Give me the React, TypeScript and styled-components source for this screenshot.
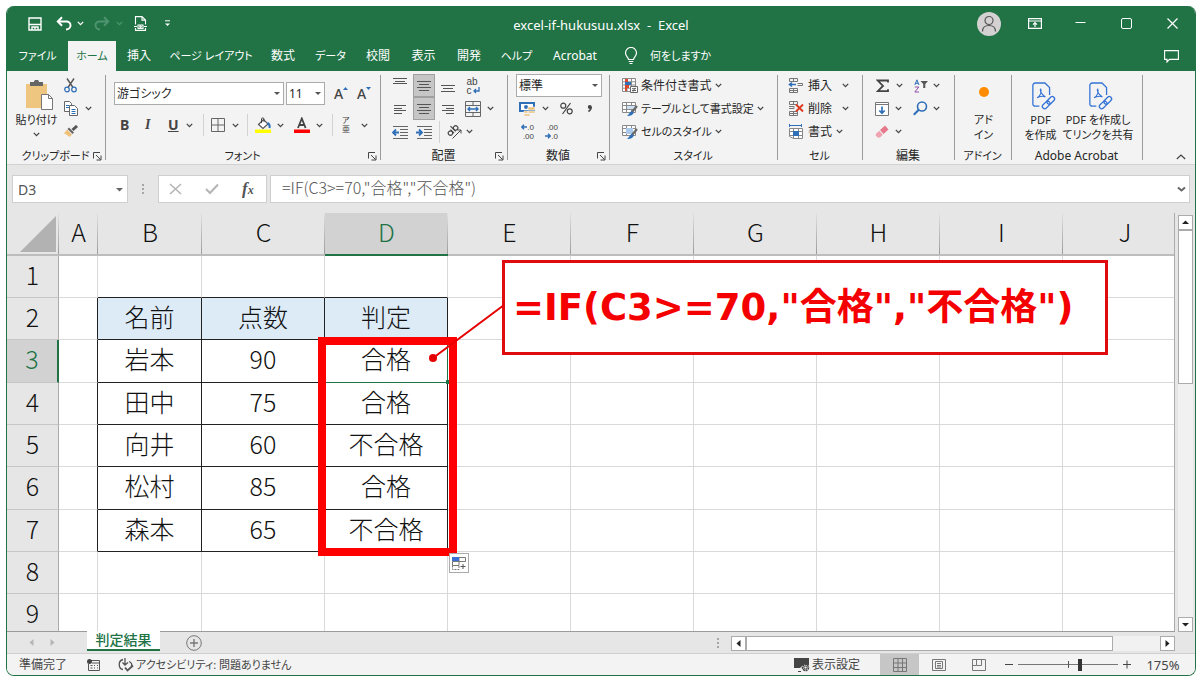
import React from 'react';
import styled, { createGlobalStyle, css } from 'styled-components';

const GREEN = '#217346';
const INK = '#444444';
const BLUE = '#2f6fb7';
const UI_FONT = '"Noto Sans", "Noto Sans CJK JP", sans-serif';
const CELL_FONT = '"Noto Sans CJK JP", "Noto Sans", sans-serif';

const Global = createGlobalStyle`
  * { box-sizing: border-box; }
  body { margin: 0; background: #fff; font-family: ${UI_FONT}; font-size: 12px; color: #262626; font-feature-settings: "palt"; }
  button, input, select { font: inherit; font-feature-settings: inherit; color: inherit; margin: 0; }
  svg { display: block; flex: none; }
`;

const Page = styled.div`
  height: 100vh;
  padding: 6px 6px 8px;
`;

const Window = styled.main`
  display: flex;
  flex-direction: column;
  height: 100%;
  overflow: hidden;
  border: 1px solid ${GREEN};
  border-top: 0;
  border-radius: 8px;
  background: #e6e6e6;
`;

const PlainButton = styled.button<{ $small?: boolean }>`
  display: flex;
  align-items: center;
  justify-content: center;
  padding: 0;
  border: 0;
  background: none;
  white-space: nowrap;
  line-height: 16px;
  ${(p) => p.$small && css`font-size: 11px;`}
`;

/* ---------- title bar ---------- */

const TitleBar = styled.header`
  display: grid;
  grid-template-columns: 1fr auto 1fr;
  align-items: center;
  height: 35px;
  flex: none;
  background: ${GREEN};
  color: #fff;
`;

const Tracks = styled.div<{ $cols: string; $pad?: number }>`
  display: grid;
  grid-template-columns: ${(p) => p.$cols};
  justify-items: start;
  align-items: center;
  padding-left: ${(p) => p.$pad ?? 0}px;
`;

const Title = styled.h1`
  margin: 0;
  font-size: 13px;
  font-weight: 400;
  line-height: 16px;
  white-space: pre;
  padding-top: 3px;
`;

const WindowButtons = styled(Tracks)`
  justify-self: end;
`;

const Avatar = styled(PlainButton)`
  width: 24px;
  height: 24px;
  border-radius: 50%;
  background: #d3d1d1;
`;

/* ---------- tabs ---------- */

const TabBar = styled.nav`
  display: flex;
  height: 30px;
  flex: none;
  background: ${GREEN};
  color: #fff;
`;

const Tab = styled(PlainButton)<{ $w: number; $active?: boolean }>`
  width: ${(p) => p.$w}px;
  ${(p) => p.$active && css`background: #f3f3f3; color: ${GREEN};`}
`;

const TellMe = styled(PlainButton)`
  gap: 12px;
  margin-left: 15px;
`;

const CommentButton = styled(PlainButton)`
  margin: 0 16px 0 auto;
`;

/* ---------- ribbon ---------- */

const Ribbon = styled.section`
  display: flex;
  height: 94px;
  flex: none;
  background: #f3f3f3;
  border-bottom: 1px solid #d2d2d2;
`;

const Group = styled.div<{ $w: number }>`
  display: flex;
  flex-direction: column;
  position: relative;
  width: ${(p) => p.$w}px;
  padding-top: 3px;
  flex: none;
  &::after {
    content: '';
    position: absolute;
    right: 0;
    top: 4px;
    bottom: 4px;
    width: 1px;
    background: #9b9b9b;
  }
`;

const GroupBody = styled.div<{ $pad?: number }>`
  height: 74px;
  padding-top: ${(p) => p.$pad ?? 0}px;
`;

const GroupFoot = styled.div<{ $small?: boolean }>`
  display: grid;
  grid-template-columns: 14px 1fr 14px;
  align-items: center;
  text-align: center;
  height: 16px;
  line-height: 16px;
  padding-right: 2px;
  white-space: nowrap;
  ${(p) => p.$small && css`font-size: 11px;`}
`;

const WideFoot = styled(GroupFoot)`
  grid-template-columns: 1fr;
`;

const ToolRow = styled(Tracks)<{ $h?: number }>`
  height: ${(p) => p.$h ?? 23}px;
`;

const Tool = styled(PlainButton)<{ $w?: number; $on?: boolean }>`
  height: 23px;
  ${(p) => p.$w && css`width: ${p.$w}px;`}
  ${(p) => p.$on && css`background: #c6c6c6; border: 1px solid #a0a0a0;`}
`;

const Letter = styled.span<{ $italic?: boolean; $under?: boolean }>`
  font-family: ${(p) => (p.$italic ? '"Liberation Serif", serif' : '"Noto Sans", sans-serif')};
  font-size: 14px;
  font-weight: 700;
  line-height: 16px;
  color: ${INK};
  font-style: ${(p) => (p.$italic ? 'italic' : 'normal')};
  text-decoration: ${(p) => (p.$under ? 'underline' : 'none')};
`;

const SizeLetter = styled(Letter)`
  font-weight: 500;
`;

const Rule = styled.span`
  width: 1px;
  height: 22px;
  background: #d2d2d2;
`;

const Combo = styled.label<{ $w: number }>`
  position: relative;
  display: block;
  width: ${(p) => p.$w}px;
  height: 23px;
  &::after {
    content: '';
    position: absolute;
    right: 4px;
    top: 10px;
    border: 3px solid transparent;
    border-top-color: #555;
    border-bottom: 0;
    pointer-events: none;
  }
  select {
    appearance: none;
    width: 100%;
    height: 100%;
    padding: 0 2px;
    border: 1px solid #ababab;
    border-radius: 0;
    background: #fff;
  }
`;

const ClipGrid = styled.div`
  display: grid;
  grid-template-columns: 57px 1fr;
`;

const BigButton = styled.button<{ $w: number; $small?: boolean }>`
  display: flex;
  flex-direction: column;
  align-items: center;
  width: ${(p) => p.$w}px;
  height: 74px;
  padding: 5px 0 0;
  border: 0;
  background: none;
  line-height: 15px;
  white-space: nowrap;
  ${(p) => p.$small && css`font-size: 11px;`}
`;

const BigIcon = styled.span<{ $pad?: number }>`
  display: flex;
  align-items: center;
  justify-content: center;
  height: 33px;
  padding-left: ${(p) => p.$pad ?? 0}px;
`;

const BigCaret = styled.span`
  padding-top: 5px;
`;

const BigPair = styled.div`
  display: flex;
`;

const LabelTool = styled(PlainButton)`
  height: 23px;
  gap: 4px;
`;

const StyleTool = styled(LabelTool)`
  gap: 3px;
`;

const Collapse = styled(PlainButton)`
  margin: auto 9px 1px auto;
  height: 12px;
`;

/* ---------- formula bar ---------- */

const FormulaBar = styled.section`
  display: flex;
  align-items: center;
  height: 48px;
  flex: none;
  padding: 0 5px;
`;

const BarBox = styled.div<{ $w?: number }>`
  display: flex;
  align-items: center;
  height: 28px;
  border: 1px solid #cfcfcf;
  background: #fff;
  ${(p) => (p.$w ? css`width: ${p.$w}px; flex: none;` : css`flex: 1; margin-left: 3px;`)}
`;

const NameInput = styled.input`
  flex: 1;
  min-width: 0;
  border: 0;
  padding: 0 5px;
  background: none;
  color: #555;
  outline: 0;
  font-size: 14px;
`;

const FormulaInput = styled(NameInput)`
  height: 26px;
  padding: 0 11px 4px;
  font-family: ${CELL_FONT};
  font-size: 16px;
  font-weight: 300;
  font-feature-settings: normal;
`;

const NameArrow = styled(PlainButton)`
  width: 16px;
`;

const FxRow = styled(Tracks)`
  flex: 1;
`;

const Fx = styled.span`
  font-family: "Liberation Serif", serif;
  font-style: italic;
  font-weight: 700;
  font-size: 17px;
  line-height: 20px;
  color: #555;
  small { font-size: 12px; }
`;

const Grip = styled.span`
  display: flex;
  flex-direction: column;
  align-items: center;
  justify-content: center;
  gap: 2px;
  width: 30px;
  flex: none;
  i { width: 2px; height: 2px; background: #a6a6a6; }
`;

const SheetGrip = styled(Grip)`
  margin-left: auto;
  margin-right: -2px;
`;

/* ---------- sheet ---------- */

const SheetArea = styled.section`
  display: flex;
  flex: 1;
  min-height: 0;
`;

const Canvas = styled.div`
  position: relative;
  flex: 1;
  min-width: 0;
  overflow: hidden;
  border-right: 1px solid #ababab;
  border-bottom: 1px solid #9b9b9b;
`;

const Grid = styled.table`
  width: calc(100% + 13px);
  table-layout: fixed;
  border-collapse: separate;
  border-spacing: 0;
  background: #fff;
  font-family: ${CELL_FONT};
  font-feature-settings: normal;
  font-size: 25px;
  line-height: 34px;
  color: #111;
  text-align: center;
  th, td { padding: 0 0 6px; font-weight: 300; overflow: hidden; }
  thead tr { height: 43px; }
  tbody tr { height: 42px; }
  tbody tr:nth-child(3n) { height: 43px; }
`;

const ColHead = styled.th<{ $on?: boolean }>`
  background: linear-gradient(#e0e0e0, #9b9b9b) right / 1px 100% no-repeat ${(p) => (p.$on ? '#d2d2d2' : '#e6e6e6')};
  border-bottom: ${(p) => (p.$on ? `2px solid ${GREEN}` : '2px solid #bdbdbd')};
  color: ${(p) => (p.$on ? GREEN : '#111')};
`;

const Corner = styled(ColHead)`
  && { padding: 0; }
  vertical-align: bottom;
  svg { margin: 0 0 2px 13px; }
`;

const RowHead = styled.th<{ $on?: boolean }>`
  background: ${(p) => (p.$on ? '#d2d2d2' : '#e6e6e6')};
  border-bottom: 1px solid #c6c6c6;
  border-right: ${(p) => (p.$on ? `2px solid ${GREEN}` : '1px solid #ababab')};
  color: ${(p) => (p.$on ? GREEN : '#111')};
`;

const Cell = styled.td<{ $right?: boolean; $bottom?: boolean; $fill?: boolean; $active?: boolean }>`
  border-right: 1px solid ${(p) => (p.$active ? GREEN : p.$right ? '#222' : '#d9d9d9')};
  border-bottom: 1px solid ${(p) => (p.$active ? GREEN : p.$bottom ? '#222' : '#d9d9d9')};
  ${(p) => p.$fill && css`background: #ddebf7;`}
`;

const FillHandle = styled.span`
  position: absolute;
  left: 439px;
  top: 167px;
  width: 4px;
  height: 4px;
  background: ${GREEN};
`;

const RedFrame = styled.div`
  position: absolute;
  left: 311px;
  top: 124px;
  width: 139px;
  height: 219px;
  border: 8px solid #ff0000;
`;

const Pointer = styled.svg`
  position: absolute;
  left: 420px;
  top: 90px;
`;

const Callout = styled.div`
  position: absolute;
  left: 495px;
  top: 47px;
  width: 606px;
  height: 95px;
  padding: 17px 8px;
  border: 3px solid #e00b0f;
  background: #fff;
  color: #f50000;
  font-family: "DejaVu Sans", "Noto Sans CJK JP", sans-serif;
  font-feature-settings: normal;
  font-size: 37px;
  font-weight: 700;
  line-height: 56px;
  white-space: nowrap;
`;

const FillOptions = styled(PlainButton)`
  position: absolute;
  left: 442px;
  top: 340px;
  width: 20px;
  height: 20px;
  border: 1px solid #ababab;
  background: #fff;
`;

const VScroll = styled.div`
  display: flex;
  flex-direction: column;
  width: 15px;
  margin: 2px 2px 0 3px;
  background: #f1f1f1;
  flex: none;
`;

const ScrollButton = styled(PlainButton)`
  width: 15px;
  height: 15px;
  flex: none;
  border: 1px solid #ababab;
  background: #fff;
`;

const VThumb = styled.div`
  margin-bottom: auto;
  flex: 0 0 154px;
  border: 1px solid #ababab;
  background: #fff;
`;

const SheetBar = styled.nav`
  display: flex;
  height: 22px;
  flex: none;
  border-bottom: 1px solid #cfcfcf;
`;

const SheetTab = styled(PlainButton)`
  position: relative;
  width: 73px;
  height: 20px;
  margin: -1px 26px 0 25px;
  border-bottom: 2px solid ${GREEN};
  background: #fff;
  color: ${GREEN};
  font-size: 14px;
  font-weight: 500;
`;

const HScroll = styled.div`
  display: flex;
  width: 444px;
  height: 15px;
  margin: 4px 20px 0 0;
  background: #f1f1f1;
  flex: none;
`;

const HThumb = styled.div`
  width: 367px;
  margin-right: auto;
  border: 1px solid #ababab;
  background: #fff;
`;

const StatusBar = styled.footer`
  display: flex;
  align-items: center;
  height: 21px;
  flex: none;
  background: #f3f3f3;
  color: #444;
  white-space: nowrap;
`;

const StatusLeft = styled.div`
  display: flex;
  align-items: center;
  margin: 0 auto 0 12px;
`;

const StatusText = styled.span`
  line-height: 16px;
`;

const StatusTool = styled(PlainButton)<{ $ml: number; $w?: number; $on?: boolean }>`
  height: 21px;
  gap: 2px;
  margin-left: ${(p) => p.$ml}px;
  ${(p) => p.$w && css`width: ${p.$w}px;`}
  ${(p) => p.$on && css`background: #c6c6c6;`}
`;

const Zoom = styled.input`
  appearance: none;
  width: 100px;
  height: 13px;
  background:
    linear-gradient(#555, #555) center / 1px 7px no-repeat,
    linear-gradient(#777, #777) center / 100% 1px no-repeat;
  && { margin: 0 5px; }
  &::-webkit-slider-thumb {
    appearance: none;
    width: 4px;
    height: 12px;
    background: #333;
  }
`;

const ZoomLevel = styled(PlainButton)`
  width: 64px;
  font-size: 13px;
`;

/* ---------- drawings ---------- */

type P = { children: React.ReactNode; w?: number; h?: number; c?: string; sw?: number };
const Svg = ({ children, w = 16, h = 16, c = INK, sw = 1 }: P) => (
  <svg width={w} height={h} viewBox={`0 0 ${w} ${h}`} fill="none" stroke={c} strokeWidth={sw} aria-hidden="true">
    {children}
  </svg>
);

const Caret = ({ c = INK }: { c?: string }) => (
  <Svg w={7} h={5} c={c} sw={1.3}><path d="M.8 .9L3.5 3.6 6.2 .9" /></Svg>
);
const CaretTool = ({ label }: { label: string }) => <Tool aria-label={label}><Caret /></Tool>;

const Launcher = () => (
  <PlainButton aria-label="詳細設定">
    <Svg w={9} h={9}><path d="M.5 6.5V.5H7M3 3l4.5 4.5M8 3.5V8H3.5" /></Svg>
  </PlainButton>
);

const Lines = ({ rows }: { rows: [number, number, number][] }) => (
  <Svg c="#555">{rows.map(([x, y, l]) => <path key={y} d={`M${x} ${y}.5h${l}`} />)}</Svg>
);

const IndentIcon = ({ right }: { right?: boolean }) => (
  <Svg>
    <path d="M1 2.5h15M8 5.5h8M8 8.5h8M8 11.5h8M1 14.5h15" stroke="#666" />
    <path d={right ? 'M0 8.5h6M3 5.5l3 3-3 3' : 'M7 8.5H1M4 5.5l-3 3 3 3'} stroke={BLUE} strokeWidth="1.8" />
  </Svg>
);

const GridBase = () => (
  <path d="M.5 1.5h13v10H.5zM.5 4.5h13M.5 8.5h13M4.5 1.5v10M9.5 1.5v10" fill="#fff" stroke="#8a8a8a" />
);

const BrushMark = () => (
  <>
    <path d="M15 5l-5 6" stroke="#666" strokeWidth="2.2" />
    <path d="M9.8 10l2 1.8c-1.3 2.6-3.5 3.4-6.8 3.2 2-1 2-3.6 4.8-5z" fill={BLUE} stroke="none" />
  </>
);

const CondIcon = () => (
  <Svg>
    <path d="M.5 .5h13v13H.5zM.5 3.8h13M.5 7h13M.5 10.2h13M5 .5v13M9.5 .5v13" fill="#fff" stroke="#8a8a8a" />
    <path d="M3 1h3v3H3zM3 7h4v3H3zM3 10h2v3H3z" fill="#d9482b" stroke="none" />
    <path d="M3 4h6v3H3z" fill={BLUE} stroke="none" />
    <path d="M8.5 8.5h7v6h-7z" fill="#fff" stroke="#666" /><path d="M10 10.7h4M10 12.5h4M13 9.7l-2 4" stroke="#666" />
  </Svg>
);
const TableFmtIcon = () => <Svg><GridBase /><path d="M5 5h8v3H5z" fill="#cfe0f3" stroke="none" /><BrushMark /></Svg>;
const CellStyleIcon = () => <Svg><GridBase /><path d="M4 4h7v6H4z" fill="#a9c8ea" stroke="none" /><BrushMark /></Svg>;

const InsertIcon = () => (
  <Svg>
    <path d="M1.5 .5h8v3h-8zM5.5 .5v3M1.5 10.5h8v4h-8zM5.5 10.5v4M1.5 12.5h8M9.5 5.500h5v2h-5" stroke="#777" />
    <path d="M8 6.5H2M4 4.5l-2.500 2L4 8.500" stroke={BLUE} strokeWidth="1.6" />
  </Svg>
);
const DeleteIcon = () => (
  <Svg>
    <path d="M1.5 .5h8v3h-8zM5.5 .5v3M1.5 10.5h8v4h-8zM5.5 10.5v4M1.5 12.5h8M1 5.5h5v2H1" stroke="#777" />
    <path d="M8 3.5l7 7M15 3.5l-7 7" stroke="#dc3a21" strokeWidth="1.900" />
  </Svg>
);
const FormatIcon = () => (
  <Svg>
    <path d="M1.5 1.5h12M1.5 0v3M13.5 0v3" stroke={BLUE} />
    <path d="M1.5 4.5h13v10h-9l-4-2zM1.5 7.5h13M1.5 11.5h13M5.5 4.5v10M10.5 4.5v10" stroke="#888" fill="#fff" />
    <path d="M5 7h6v5H5z" fill={BLUE} stroke="none" />
  </Svg>
);

const AcrobatIcon = () => (
  <svg width="26" height="28" viewBox="0 0 28 30" fill="none" stroke="#3574d6" strokeWidth="1.4" aria-hidden="true">
    <path d="M9 26H4.500a2.500 2.500 0 01-2.500-2.500V3.500A2.500 2.500 0 014.500 1H15l5 5v8" />
    <path d="M6.500 17c3-1 5.500-7 4-9.500-1.200 0-.6 5 5 8.500-3-1.200-6.500-.6-9 1z" strokeWidth="1.100" />
    <g transform="rotate(-45 19 22)">
      <rect x="10.500" y="19.500" width="9.500" height="5" rx="2.500" /><rect x="17.500" y="19.500" width="9.500" height="5" rx="2.500" />
    </g>
  </svg>
);

const Triangle = ({ dir, c = '#222' }: { dir: 'u' | 'd' | 'l' | 'r'; c?: string }) => {
  const d = { u: 'M1 6h7L4.500 2.500z', d: 'M1 3h7L4.500 6.500z', l: 'M6.500 1v7L2.500 4.500z', r: 'M2.500 1v7l4-3.500z' }[dir];
  return <svg width="9" height="9" viewBox="0 0 9 9" fill={c} aria-hidden="true"><path d={d} /></svg>;
};

const FontSizeIcon = ({ up }: { up?: boolean }) => (
  <>
    <SizeLetter>A</SizeLetter>
    <Svg w={5} h={16}><path d={up ? 'M0 4h5L2.500 1z' : 'M0 1h5L2.500 4z'} fill={BLUE} stroke="none" /></Svg>
  </>
);

const Decimals = styled.span`
  display: grid;
  grid-template-columns: auto auto;
  justify-content: end;
  justify-items: end;
  align-items: center;
  width: 14px;
  font-family: "Liberation Sans", sans-serif;
  font-size: 8px;
  line-height: 9px;
  color: ${INK};
  b { grid-column: 1 / 3; font-weight: 400; }
`;

const MiniArrow = ({ right }: { right?: boolean }) => (
  <Svg w={6} h={6} c={BLUE} sw={1.5}><path d={right ? 'M0 3h5M3 .8L5.200 3 3 5.200' : 'M6 3H1M3 .8L.8 3 3 5.200'} /></Svg>
);

const Stack = styled.span<{ $size: number }>`
  display: flex;
  flex-direction: column;
  align-items: flex-start;
  font-family: "Liberation Sans", "Noto Sans CJK JP", sans-serif;
  font-size: ${(p) => p.$size}px;
  line-height: 9px;
  color: ${INK};
  span { display: flex; align-items: center; gap: 1px; height: 9px; }
`;

const TABS: { name: string; w: number; small?: boolean }[] = [
  { name: 'ファイル', w: 61, small: true },
  { name: 'ホーム', w: 48, small: true },
  { name: '挿入', w: 46 },
  { name: 'ページ レイアウト', w: 98, small: true },
  { name: '数式', w: 46 },
  { name: 'データ', w: 49, small: true },
  { name: '校閲', w: 46 },
  { name: '表示', w: 45 },
  { name: '開発', w: 46 },
  { name: 'ヘルプ', w: 49, small: true },
  { name: 'Acrobat', w: 68 },
];

const COLS = ['A', 'B', 'C', 'D', 'E', 'F', 'G', 'H', 'I', 'J'];
const WIDTHS = [52, 39, 104, 123, 123, 123, 123, 123, 123, 123];
const DATA: Record<number, string[]> = {
  2: ['名前', '点数', '判定'],
  3: ['岩本', '90', '合格'],
  4: ['田中', '75', '合格'],
  5: ['向井', '60', '不合格'],
  6: ['松村', '85', '合格'],
  7: ['森本', '65', '不合格'],
};

const Sheet = () => (
  <Grid>
    <colgroup>
      {WIDTHS.map((w, i) => <col key={i} width={w} />)}
      <col />
    </colgroup>
    <thead>
      <tr>
        <Corner><svg width="36" height="36" viewBox="0 0 36 36" aria-hidden="true"><path d="M36 0v36H0z" fill="#b2b2b2" /></svg></Corner>
        {COLS.map((c) => <ColHead key={c} scope="col" $on={c === 'D'}>{c}</ColHead>)}
      </tr>
    </thead>
    <tbody>
      {[1, 2, 3, 4, 5, 6, 7, 8, 9].map((r) => (
        <tr key={r}>
          <RowHead scope="row" $on={r === 3}>{r}</RowHead>
          {COLS.map((c, i) => {
            const inRows = r >= 2 && r <= 7;
            const inCols = i >= 1 && i <= 3;
            return (
              <Cell
                key={c}
                $right={inRows && i <= 3}
                $bottom={inCols && r <= 7}
                $fill={r === 2 && inCols}
                $active={r === 3 && i === 3}
              >
                {inCols && DATA[r] ? DATA[r][i - 1] : null}
              </Cell>
            );
          })}
        </tr>
      ))}
    </tbody>
  </Grid>
);

export default function App() {
  return (
    <Page>
      <Global />
      <Window>
        <TitleBar>
          <Tracks $pad={21} $cols="28px 21px 17px 22px 18px 31px auto">
            <PlainButton aria-label="上書き保存">
              <Svg w={14} h={14} c="#fff" sw={1.4}><path d="M1 1h12v12H1zM1.500 7.500h11M4 13v-3h6v3" /><path d="M7 10v2.500" /></Svg>
            </PlainButton>
            <PlainButton aria-label="元に戻す">
              <Svg w={16} h={15} c="#fff" sw={2}><path d="M2 5.500h8.500c2.500 0 4 1.800 4 3.700 0 2.600-2 4.300-4.500 4.300M6 1.300L1.800 5.500 6 9.700" /></Svg>
            </PlainButton>
            <PlainButton aria-label="元に戻す履歴"><Caret c="#fff" /></PlainButton>
            <PlainButton aria-label="やり直し">
              <Svg w={16} h={15} c="#4f9470" sw={2}><path d="M14 5.500H5.500c-2.500 0-4 1.800-4 3.700 0 2.600 2 4.300 4.500 4.300M10 1.300l4.200 4.200L10 9.700" /></Svg>
            </PlainButton>
            <PlainButton aria-label="やり直し履歴"><Caret c="#4f9470" /></PlainButton>
            <PlainButton aria-label="印刷プレビュー">
              <Svg w={13} h={15} c="#fff" sw={1.1}><path d="M1.500 8.500V.6h6.500l3.500 3.500v4.400M8 .6v3.500h3.500M1.500 12v2.400h10V12M0 10.500h3M10 10.500h3" /><path d="M4 9h5v3.500H4z" /><circle cx="6.500" cy="10.700" r=".8" /></Svg>
            </PlainButton>
            <PlainButton aria-label="クイック アクセスのカスタマイズ">
              <Svg w={5} h={7} c="#fff"><path d="M0 .8h5" /><path d="M0 3.500h5L2.500 6z" fill="#fff" stroke="none" /></Svg>
            </PlainButton>
          </Tracks>
          <Title>{'excel-if-hukusuu.xlsx  -  Excel'}</Title>
          <WindowButtons $cols="51px 47px 46px 46px 28px">
            <Avatar aria-label="アカウント">
              <Svg w={16} h={18} c="#555" sw={1.2}><circle cx="8" cy="5.500" r="4" /><path d="M1.500 16.500c0-4 2.700-6 6.500-6s6.500 2 6.500 6" /></Svg>
            </Avatar>
            <PlainButton aria-label="リボンの表示オプション">
              <Svg w={14} h={11} c="#fff" sw={1.2}><path d="M.6 .6h12.800v9.800H.6zM.6 3h12.800M7 9V5M5 6.700l2-2 2 2" /></Svg>
            </PlainButton>
            <PlainButton aria-label="最小化"><Svg w={11} h={11} c="#fff"><path d="M.5 4.500h10" /></Svg></PlainButton>
            <PlainButton aria-label="最大化"><Svg w={11} h={11} c="#fff"><rect x=".5" y=".5" width="10" height="10" rx="1.500" /></Svg></PlainButton>
            <PlainButton aria-label="閉じる"><Svg w={11} h={11} c="#fff" sw={1.2}><path d="M.5 .5l10 10M10.500 .5l-10 10" /></Svg></PlainButton>
          </WindowButtons>
        </TitleBar>

        <TabBar>
          {TABS.map((t) => <Tab key={t.name} $w={t.w} $small={t.small} $active={t.name === 'ホーム'}>{t.name}</Tab>)}
          <TellMe $small>
            <Svg w={14} h={18} c="#fff" sw={1.2}><path d="M4.500 12.500c0-2-3-3.200-3-6.500a5.500 5.500 0 0111 0c0 3.300-3 4.500-3 6.500zM4.700 14.500h4.600M5.500 16.500h3" /></Svg>
            何をしますか
          </TellMe>
          <CommentButton aria-label="コメント">
            <Svg w={15} h={13} c="#fff" sw={1.1}><path d="M.6 .6h13.800v8.800H5.500L3 12V9.400H.6z" /></Svg>
          </CommentButton>
        </TabBar>

        <Ribbon>
          <Group $w={99}>
            <GroupBody>
              <ClipGrid>
                <BigButton $w={59} $small>
                  <BigIcon $pad={4}>
                    <Svg w={28} h={31} c="#777">
                      <path d="M1 4h21v24H1z" fill="#eec67f" stroke="none" />
                      <path d="M5 2h4c0-3 5-3 5 0h4v4H5z" fill="#666" stroke="none" />
                      <path d="M16.500 14.500h7l4 4v11h-11z" fill="#fff" /><path d="M23.500 14.500v4h4" />
                    </Svg>
                  </BigIcon>
                  貼り付け
                  <BigCaret><Caret /></BigCaret>
                </BigButton>
                <div>
                  <ToolRow $cols="auto">
                    <Tool aria-label="切り取り">
                      <Svg w={13} h={15} c="#555" sw={1.4}><path d="M3 .5l6 9M10 .5l-6 9" /><g stroke={BLUE} strokeWidth="1.2"><circle cx="3" cy="11.500" r="2.300" /><circle cx="10" cy="11.500" r="2.300" /></g></Svg>
                    </Tool>
                  </ToolRow>
                  <ToolRow $cols="21px auto">
                    <Tool aria-label="コピー">
                      <Svg w={14} h={15} c="#666"><path d="M.5 .5h5l2 2v8h-7z" fill="#fff" /><path d="M5.500 4.500h5l3 3v7h-8z" fill="#fff" /><path d="M2 4.500h3M2 6.500h3M7.500 8.500h4M7.500 10.500h4M7.500 12.500h4" stroke={BLUE} /></Svg>
                    </Tool>
                    <CaretTool label="コピーのオプション" />
                  </ToolRow>
                  <ToolRow $cols="auto">
                    <Tool aria-label="書式のコピー">
                      <Svg w={14} h={13}><path d="M13 1L8.500 5" stroke="#555" strokeWidth="3" /><path d="M5 2.500l5 5-1.500 1.500L3.500 4z" fill="#666" stroke="none" /><path d="M3 4.500l5 5L5.500 12C4 10.500 2 9 0 8.500z" fill="#eec07a" stroke="none" /></Svg>
                    </Tool>
                  </ToolRow>
                </div>
              </ClipGrid>
            </GroupBody>
            <GroupFoot $small><span /><span>クリップボード</span><Launcher /></GroupFoot>
          </Group>

          <Group $w={275}>
            <GroupBody $pad={8}>
              <ToolRow $pad={8} $cols="172px 48px 23px auto">
                <Combo $w={170}><select aria-label="フォント"><option>游ゴシック</option></select></Combo>
                <Combo $w={39}><select aria-label="フォント サイズ"><option>11</option></select></Combo>
                <Tool aria-label="フォント サイズの拡大"><FontSizeIcon up /></Tool>
                <Tool aria-label="フォント サイズの縮小"><FontSizeIcon /></Tool>
              </ToolRow>
              <ToolRow $h={40} $pad={14} $cols="25px 23px 18px 17px 8px 21px 15px 8px 22px 17px 22px 16px 10px 19px auto">
                <Tool aria-label="太字"><Letter>B</Letter></Tool>
                <Tool aria-label="斜体"><Letter $italic>I</Letter></Tool>
                <Tool aria-label="下線"><Letter $under>U</Letter></Tool>
                <CaretTool label="下線のオプション" />
                <Rule />
                <Tool aria-label="罫線"><Svg w={14} h={14} c="#666"><path d="M.5 .5h13v13H.5zM.5 7h13M7 .5v13" /></Svg></Tool>
                <CaretTool label="罫線のオプション" />
                <Rule />
                <Tool aria-label="塗りつぶしの色">
                  <Svg w={17} h={16}><path d="M3.500 7.500l5-5 4.500 4.500-5 4.500z" fill="#fff" stroke="#555" strokeWidth="1.2" /><path d="M6.500 6V2c0-1.500 2.500-1.500 2.500 0v3" /><path d="M12.500 6c2 1 2.500 3 2 5" stroke={BLUE} strokeWidth="2" /><path d="M0 12.500h16V16H0z" fill="#ffff00" stroke="none" /></Svg>
                </Tool>
                <CaretTool label="塗りつぶしのオプション" />
                <Tool aria-label="フォントの色">
                  <Svg w={16} h={16}><path d="M4 11L7.800 1.500 11.600 11M5.300 8h5" stroke="#444" strokeWidth="1.8" /><path d="M0 12.500h16V16H0z" fill="#ff0000" stroke="none" /></Svg>
                </Tool>
                <CaretTool label="フォントの色のオプション" />
                <Rule />
                <Tool aria-label="ふりがな"><Stack $size={8}><span>ア</span><span>亜</span></Stack></Tool>
                <CaretTool label="ふりがなのオプション" />
              </ToolRow>
            </GroupBody>
            <GroupFoot $small><span /><span>フォント</span><Launcher /></GroupFoot>
          </Group>

          <Group $w={127}>
            <GroupBody>
              <ToolRow $pad={8} $cols="24px 24px 25px auto">
                <Tool $w={22} aria-label="上揃え"><Lines rows={[[1, 0, 14], [3, 3, 10], [1, 5, 14]]} /></Tool>
                <Tool $w={22} $on aria-label="上下中央揃え"><Lines rows={[[1, 3, 14], [3, 6, 10], [1, 9, 14], [3, 12, 10]]} /></Tool>
                <Tool $w={22} aria-label="下揃え"><Lines rows={[[1, 7, 14], [3, 10, 10], [1, 13, 14]]} /></Tool>
                <Tool $w={22} aria-label="折り返して全体を表示する">
                  <Stack $size={10}><span>ab</span><span>c<Svg w={7} h={7} c={BLUE} sw={1.3}><path d="M6 0v4H1M3 2L1 4l2 2" /></Svg></span></Stack>
                </Tool>
              </ToolRow>
              <ToolRow $pad={8} $cols="24px 24px 25px 25px auto">
                <Tool $w={22} aria-label="左揃え"><Lines rows={[[2, 4, 12], [2, 7, 8], [2, 9, 12], [2, 12, 8]]} /></Tool>
                <Tool $w={22} $on aria-label="中央揃え"><Lines rows={[[1, 3, 14], [3, 6, 10], [1, 9, 14], [3, 12, 10]]} /></Tool>
                <Tool $w={22} aria-label="右揃え"><Lines rows={[[2, 4, 12], [6, 7, 8], [2, 9, 12], [6, 12, 8]]} /></Tool>
                <Tool $w={22} aria-label="セルを結合して中央揃え">
                  <Svg c="#666"><path d="M.5 .5h15v15H.5zM.5 4.500h15M.5 11.500h15M8 .5v4M8 11.500v4" /><path d="M3 8h10M5 6L3 8l2 2M11 6l2 2-2 2" stroke={BLUE} strokeWidth="1.4" /></Svg>
                </Tool>
                <CaretTool label="結合のオプション" />
              </ToolRow>
              <ToolRow $pad={8} $cols="24px 26px 5px 22px auto">
                <Tool $w={22} aria-label="インデントを減らす"><IndentIcon /></Tool>
                <Tool $w={22} aria-label="インデントを増やす"><IndentIcon right /></Tool>
                <Rule />
                <Tool $w={22} aria-label="方向">
                  <Svg w={16} h={16}><g transform="rotate(-45 7 7)" strokeWidth="1.2"><circle cx="3" cy="6" r="2.200" /><path d="M5.500 3.500v5M8 1v7.500" /><circle cx="10.300" cy="6" r="2.200" /></g><path d="M5.500 14.500l8.500-8.500M10.500 6H14v3.500" /></Svg>
                </Tool>
                <CaretTool label="方向のオプション" />
              </ToolRow>
            </GroupBody>
            <GroupFoot><span /><span>配置</span><Launcher /></GroupFoot>
          </Group>

          <Group $w={102}>
            <GroupBody>
              <ToolRow $pad={8} $cols="auto">
                <Combo $w={86}><select aria-label="表示形式"><option>標準</option></select></Combo>
              </ToolRow>
              <ToolRow $pad={11} $cols="23px 18px 27px auto">
                <Tool aria-label="通貨表示形式">
                  <Svg w={17} h={16}><path d="M1 2h14v8H1z" fill="#fff" stroke={BLUE} strokeWidth="2" /><circle cx="7" cy="6" r="2" fill={BLUE} stroke="none" /><path d="M9 6h7v3H9zM9 10h7v2H9zM5 13h6v2H5zM5 10h4v2H5z" fill="#edc27c" stroke="#f3f3f3" strokeWidth=".6" /></Svg>
                </Tool>
                <CaretTool label="通貨のオプション" />
                <Tool aria-label="パーセント スタイル">
                  <Svg w={13} h={13} sw={1.2}><circle cx="3.300" cy="3.700" r="2.500" /><circle cx="9.700" cy="9.300" r="2.500" /><path d="M10.500 1L2.500 12" /></Svg>
                </Tool>
                <Tool aria-label="桁区切りスタイル">
                  <Svg w={6} h={10}><circle cx="2.800" cy="3" r="2" fill={INK} stroke="none" /><path d="M4.200 3c0 2.200-.8 3.500-2.800 4.500" strokeWidth="1.4" /></Svg>
                </Tool>
              </ToolRow>
              <ToolRow $pad={12} $cols="24px auto">
                <Tool aria-label="小数点以下の表示桁数を増やす"><Decimals><MiniArrow /><span>.0</span><b>.00</b></Decimals></Tool>
                <Tool aria-label="小数点以下の表示桁数を減らす"><Decimals><b>.00</b><MiniArrow right /><span>.0</span></Decimals></Tool>
              </ToolRow>
            </GroupBody>
            <GroupFoot><span /><span>数値</span><Launcher /></GroupFoot>
          </Group>

          <Group $w={168}>
            <GroupBody>
              <ToolRow $pad={12} $cols="auto"><StyleTool><CondIcon />条件付き書式<Caret /></StyleTool></ToolRow>
              <ToolRow $pad={12} $cols="auto"><StyleTool $small><TableFmtIcon />テーブルとして書式設定<Caret /></StyleTool></ToolRow>
              <ToolRow $pad={12} $cols="auto"><StyleTool $small><CellStyleIcon />セルのスタイル<Caret /></StyleTool></ToolRow>
            </GroupBody>
            <GroupFoot $small><span /><span>スタイル</span></GroupFoot>
          </Group>

          <Group $w={85}>
            <GroupBody>
              <ToolRow $pad={10} $cols="54px auto"><LabelTool><InsertIcon />挿入</LabelTool><CaretTool label="挿入のオプション" /></ToolRow>
              <ToolRow $pad={10} $cols="54px auto"><LabelTool><DeleteIcon />削除</LabelTool><CaretTool label="削除のオプション" /></ToolRow>
              <ToolRow $pad={10} $cols="auto"><LabelTool><FormatIcon />書式<Caret /></LabelTool></ToolRow>
            </GroupBody>
            <GroupFoot $small><span /><span>セル</span></GroupFoot>
          </Group>

          <Group $w={92}>
            <GroupBody>
              <ToolRow $pad={13} $cols="20px 18px 19px auto">
                <Tool aria-label="オート SUM"><Svg w={13} h={14} sw={1.8}><path d="M12 3.500V1.500H1.800L7 7l-5.200 5.200H12v-2" /></Svg></Tool>
                <CaretTool label="オート SUM のオプション" />
                <Tool aria-label="並べ替えとフィルター">
                  <Svg w={15} h={14}><path d="M.8 6L2.900 .8 5 6M1.500 4.300h2.800" stroke={BLUE} /><path d="M.8 8h4l-4 5h4.200" stroke="#8e4fa8" /><path d="M6.500 2h7.500L11.300 5v4H9.200V5z" fill="#555" stroke="none" /></Svg>
                </Tool>
                <CaretTool label="並べ替えのオプション" />
              </ToolRow>
              <ToolRow $pad={12} $cols="20px 18px 20px auto">
                <Tool aria-label="フィル"><Svg w={14} h={14} c="#777"><path d="M.5 .5h13v13H.5z" fill="#fff" /><path d="M.5 2.500h13" /><path d="M7 4.500v7M4.300 8.500L7 11.200l2.700-2.700" stroke={BLUE} strokeWidth="1.7" /></Svg></Tool>
                <CaretTool label="フィルのオプション" />
                <Tool aria-label="検索と選択"><Svg w={15} h={15} c={BLUE} sw={1.6}><circle cx="9" cy="5.500" r="4.500" /><path d="M5.800 8.800L.8 13.800" strokeWidth="2" /></Svg></Tool>
                <CaretTool label="検索のオプション" />
              </ToolRow>
              <ToolRow $pad={12} $cols="20px auto">
                <Tool aria-label="クリア"><Svg w={14} h={14}><path d="M5 5l5-4.500 3.500 4-5 4.500z" fill="#e8788c" stroke="none" /><path d="M4.300 5.700L7.800 9.700 5 12.500H2.500L.8 10.500V9z" fill="#f0a2b0" stroke="none" /></Svg></Tool>
                <CaretTool label="クリアのオプション" />
              </ToolRow>
            </GroupBody>
            <GroupFoot><span /><span>編集</span></GroupFoot>
          </Group>

          <Group $w={57}>
            <GroupBody>
              <BigButton $w={57} $small>
                <BigIcon><Svg w={12} h={20}><circle cx="6" cy="6" r="5" fill="#ff8c00" stroke="none" /></Svg></BigIcon>
                <span>アド</span><span>イン</span>
              </BigButton>
            </GroupBody>
            <WideFoot $small><span>アドイン</span></WideFoot>
          </Group>

          <Group $w={131}>
            <GroupBody>
              <BigPair>
                <BigButton $w={57} $small><BigIcon $pad={6}><AcrobatIcon /></BigIcon><span>PDF</span><span>を作成</span></BigButton>
                <BigButton $w={58} $small><BigIcon $pad={6}><AcrobatIcon /></BigIcon><span>PDF を作成し</span><span>てリンクを共有</span></BigButton>
              </BigPair>
            </GroupBody>
            <WideFoot><span>Adobe Acrobat</span></WideFoot>
          </Group>
          <Collapse aria-label="リボンを折りたたむ"><Svg w={10} h={6} sw={1.2}><path d="M.8 5L5 1l4.200 4" /></Svg></Collapse>
        </Ribbon>

        <FormulaBar>
          <BarBox $w={116}>
            <NameInput aria-label="名前ボックス" defaultValue="D3" />
            <NameArrow aria-label="名前の一覧"><Triangle dir="d" c="#666" /></NameArrow>
          </BarBox>
          <Grip><i /><i /><i /></Grip>
          <BarBox $w={109}>
            <FxRow $pad={10} $cols="36px 37px auto">
              <PlainButton aria-label="キャンセル"><Svg w={13} h={12} c="#b5b5b5" sw={1.6}><path d="M1 1l11 10M12 1L1 11" /></Svg></PlainButton>
              <PlainButton aria-label="入力"><Svg w={14} h={12} c="#b5b5b5" sw={2}><path d="M1 6l4 4L13 1.500" /></Svg></PlainButton>
              <PlainButton aria-label="関数の挿入"><Fx>f<small>x</small></Fx></PlainButton>
            </FxRow>
          </BarBox>
          <BarBox>
            <FormulaInput aria-label="数式バー" defaultValue={'=IF(C3>=70,"合格","不合格")'} />
            <PlainButton aria-label="数式バーの展開">
              <Svg w={12} h={7} c="#666" sw={2}><path d="M1 1.500l3.500 3L8 1.500" /></Svg>
            </PlainButton>
          </BarBox>
        </FormulaBar>

        <SheetArea>
          <Canvas>
            <Sheet />
            <FillHandle />
            <RedFrame />
            <FillOptions aria-label="オートフィル オプション">
              <Svg w={16} h={16} c="#777"><path d="M1.500 2.500h13v4h-13zM8 2.500v4M1.500 6.500v4H8v-4" /><path d="M1.500 10.500v4H8v-4" strokeDasharray="2 1" /><path d="M1 2h7v4H1z" fill="#3c6fd1" stroke="none" /><path d="M12 9v5M9.500 11.500h5" stroke="#555" /></Svg>
            </FillOptions>
            <Callout>{'=IF(C3>=70,"合格","不合格")'}</Callout>
            <Pointer width="80" height="60" viewBox="0 0 80 60" aria-hidden="true">
              <path d="M6 55L77 2" stroke="#e60000" strokeWidth="2" /><circle cx="6" cy="55" r="4" fill="#e60000" />
            </Pointer>
          </Canvas>
          <VScroll>
            <ScrollButton aria-label="上へ"><Triangle dir="u" /></ScrollButton>
            <VThumb />
            <ScrollButton aria-label="下へ"><Triangle dir="d" /></ScrollButton>
          </VScroll>
        </SheetArea>

        <SheetBar>
          <Tracks $pad={20} $cols="21px 14px">
            <PlainButton aria-label="前のシート"><Triangle dir="l" c="#b5b5b5" /></PlainButton>
            <PlainButton aria-label="次のシート"><Triangle dir="r" c="#b5b5b5" /></PlainButton>
          </Tracks>
          <SheetTab>判定結果</SheetTab>
          <PlainButton aria-label="新しいシート">
            <Svg w={16} h={16} c="#777"><circle cx="8" cy="8" r="7.300" /><path d="M8 4v8M4 8h8" strokeWidth="1.4" /></Svg>
          </PlainButton>
          <SheetGrip><i /><i /><i /></SheetGrip>
          <HScroll>
            <ScrollButton aria-label="左へ"><Triangle dir="l" /></ScrollButton>
            <HThumb />
            <ScrollButton aria-label="右へ"><Triangle dir="r" /></ScrollButton>
          </HScroll>
        </SheetBar>

        <StatusBar>
          <StatusLeft>
            <StatusText>準備完了</StatusText>
            <StatusTool $ml={20} aria-label="マクロの記録">
              <Svg w={13} h={12} c="#555"><path d="M3 1.500h9.500v10h-11V5M5 4h7M3.500 6.500h2M7 6.500h1M10 6.500h1M3.500 9h2M7 9h1M10 9h1" /><circle cx="2.500" cy="2.500" r="2.500" fill="#444" stroke="none" /></Svg>
            </StatusTool>
            <StatusTool $ml={18} $small>
              <Svg w={16} h={14} c="#555" sw={1.3}><path d="M5 1.500C-.5 3 .5 11 5 11.500M7 0v7M4.500 4.500L7 7l3-2.500M11 3.500c2.500 1 3 3 2.500 4.500" /><path d="M7 9.500l2.500 3L15 7.500" strokeWidth="1.8" /></Svg>
              アクセシビリティ: 問題ありません
            </StatusTool>
          </StatusLeft>
          <StatusTool $ml={0}>
            <Svg w={16} h={15}><path d="M0 1h15v7H9l-3 3H0z" fill="#444" stroke="none" /><path d="M4 14.500h3" /><circle cx="11.500" cy="10.500" r="3" fill="#f3f3f3" stroke="#444" strokeWidth="1.6" strokeDasharray="2 .6" /><circle cx="11.500" cy="10.500" r="1.500" /></Svg>
            表示設定
          </StatusTool>
          <StatusTool $ml={20} $w={39} $on aria-label="標準">
            <Svg w={14} h={14} c="#777"><path d="M.5 .5h13v13H.5zM.5 5h13M.5 9.500h13M5 .5v13M9.500 .5v13" /></Svg>
          </StatusTool>
          <StatusTool $ml={0} $w={40} aria-label="ページ レイアウト">
            <Svg w={14} h={14} c="#777"><path d="M.5 1.500h13v11H.5zM3.500 3.500h7v7h-7zM5 5.500h4M5 7.500h4M5 9h4" /></Svg>
          </StatusTool>
          <StatusTool $ml={0} $w={40} aria-label="改ページ プレビュー">
            <Svg w={14} h={14} c="#777"><path d="M.5 1.500h13v11H.5zM4.500 1.500v6h5v-6M.5 7.500h4" /></Svg>
          </StatusTool>
          <StatusTool $ml={6} aria-label="縮小"><Svg w={8} h={9}><path d="M0 4.500h8" /></Svg></StatusTool>
          <Zoom type="range" min={0} max={100} defaultValue={63} aria-label="ズーム" />
          <StatusTool $ml={0} aria-label="拡大"><Svg w={8} h={9}><path d="M0 4.500h8M4 .5v8" /></Svg></StatusTool>
          <ZoomLevel>175%</ZoomLevel>
        </StatusBar>
      </Window>
    </Page>
  );
}
